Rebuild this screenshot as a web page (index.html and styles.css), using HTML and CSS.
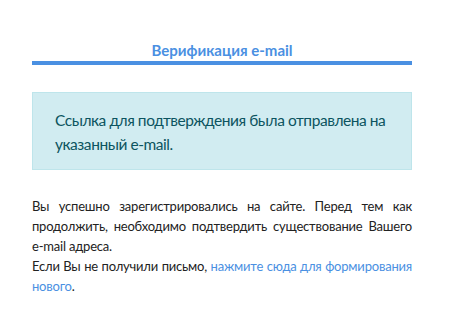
FILE: index.html
```html
<!DOCTYPE html>
<html lang="ru">
<head>
<meta charset="utf-8">
<title>Верификация e-mail</title>
<link rel="stylesheet" href="styles.css">
</head>
<body>
<div class="page">
  <h1 class="title">Верификация e-mail</h1>
  <div class="alert">Ссылка для подтверждения была отправлена на указанный e-mail.</div>
  <p class="text">Вы успешно зарегистрировались на сайте. Перед тем как продолжить, необходимо подтвердить существование Вашего e-mail адреса.<br>Если Вы не получили письмо, <a class="link" href="#">нажмите сюда для формирования нового</a>.</p>
</div>
</body>
</html>
```
FILE: styles.css
```css
html, body {
  margin: 0;
  padding: 0;
  background: #fff;
}
.page {
  width: 380px;
  margin-left: 32px;
  padding-top: 40px;
  font-family: Lato, "Noto Sans", sans-serif;
}
.title {
  margin: 0;
  font-size: 15px;
  line-height: 20px;
  font-weight: bold;
  color: #4a90e2;
  text-align: center;
  padding-bottom: 1px;
  border-bottom: 4px solid #4a90e2;
}
.alert {
  margin-top: 27px;
  padding: 15px 16px 13px 22px;
  background: #d1ecf1;
  border: 1px solid #bee5eb;
  color: #0c5460;
  font-size: 15.5px;
  letter-spacing: -0.45px;
  line-height: 24px;
}
.text {
  margin: 26px 0 0;
  font-size: 13px;
  letter-spacing: -0.2px;
  line-height: 20px;
  color: #222;
  text-align: justify;
}
.link {
  color: #4a90e2;
  text-decoration: none;
}
```
